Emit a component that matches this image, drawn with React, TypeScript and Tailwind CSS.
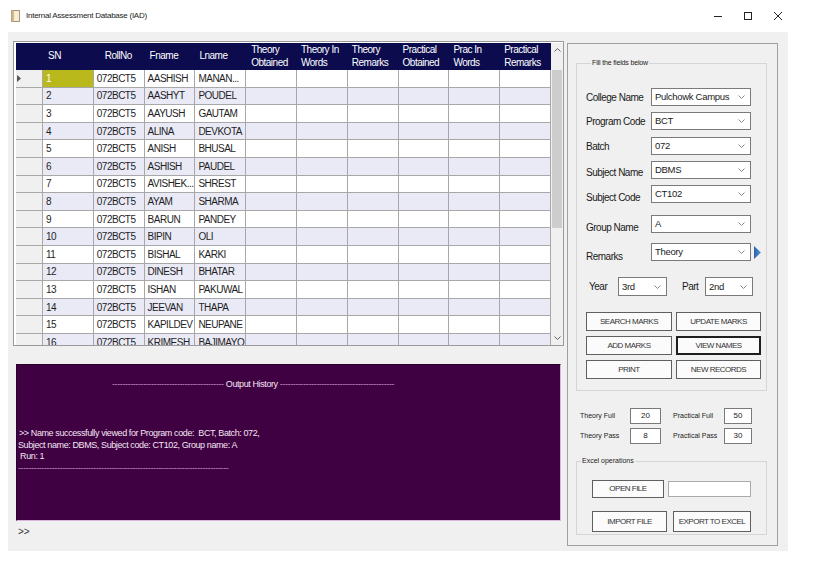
import React from 'react';

const rows: [string, string, string, string][] = [
  ['1', '072BCT5', 'AASHISH', 'MANAN...'],
  ['2', '072BCT5', 'AASHYT', 'POUDEL'],
  ['3', '072BCT5', 'AAYUSH', 'GAUTAM'],
  ['4', '072BCT5', 'ALINA', 'DEVKOTA'],
  ['5', '072BCT5', 'ANISH', 'BHUSAL'],
  ['6', '072BCT5', 'ASHISH', 'PAUDEL'],
  ['7', '072BCT5', 'AVISHEK...', 'SHREST'],
  ['8', '072BCT5', 'AYAM', 'SHARMA'],
  ['9', '072BCT5', 'BARUN', 'PANDEY'],
  ['10', '072BCT5', 'BIPIN', 'OLI'],
  ['11', '072BCT5', 'BISHAL', 'KARKI'],
  ['12', '072BCT5', 'DINESH', 'BHATAR'],
  ['13', '072BCT5', 'ISHAN', 'PAKUWAL'],
  ['14', '072BCT5', 'JEEVAN', 'THAPA'],
  ['15', '072BCT5', 'KAPILDEV', 'NEUPANE'],
  ['16', '072BCT5', 'KRIMESH', 'BAJIMAYO'],
];

const headers: [string, string, string][] = [
  ['SN', '', 'pl-[5px]'],
  ['RollNo', '', 'pl-[11px]'],
  ['Fname', '', 'pl-[5px]'],
  ['Lname', '', 'pl-[4px]'],
  ['Theory', 'Obtained', 'pl-[5px]'],
  ['Theory In', 'Words', 'pl-[4px]'],
  ['Theory', 'Remarks', 'pl-[4px]'],
  ['Practical', 'Obtained', 'pl-[4px]'],
  ['Prac In', 'Words', 'pl-[4px]'],
  ['Practical', 'Remarks', 'pl-[4px]'],
];

function Chevron() {
  return (
    <svg width="7" height="4" viewBox="0 0 7 4" className="shrink-0">
      <polyline points="0.5,0.5 3.5,3.5 6.5,0.5" fill="none" stroke="#8a8a8a" strokeWidth="1" />
    </svg>
  );
}

function Combo({ className, value }: { className: string; value: string }) {
  return (
    <div
      className={`flex items-center justify-between bg-white border border-[#7a7a7a] pl-[3px] pr-[5px] text-[9.5px] tracking-[-0.3px] text-[#1a1a1a] whitespace-nowrap shrink-0 ${className}`}
    >
      <span className="leading-none">{value}</span>
      <Chevron />
    </div>
  );
}

function Btn({
  className,
  children,
  strong,
}: {
  className: string;
  children: React.ReactNode;
  strong?: boolean;
}) {
  return (
    <div
      className={`flex items-center justify-center bg-[#fbfbfb] text-[8px] tracking-[-0.5px] text-[#333] whitespace-nowrap shrink-0 ${
        strong ? 'border-2 border-[#1e1e1e]' : 'border border-[#5f5f5f]'
      } ${className}`}
    >
      {children}
    </div>
  );
}

const fieldRows: { label: string; value: string; mt: string; lp: string; arrow?: boolean }[] = [
  { label: 'College Name', value: 'Pulchowk Campus', mt: 'mt-[20px]', lp: '' },
  { label: 'Program Code', value: 'BCT', mt: 'mt-[6px]', lp: '' },
  { label: 'Batch', value: '072', mt: 'mt-[7px]', lp: '' },
  { label: 'Subject Name', value: 'DBMS', mt: 'mt-[6px]', lp: 'pt-[5px]' },
  { label: 'Subject Code', value: 'CT102', mt: 'mt-[6px]', lp: 'pt-[6px]' },
  { label: 'Group Name', value: 'A', mt: 'mt-[12px]', lp: 'pt-[6px]' },
  { label: 'Remarks', value: 'Theory', mt: 'mt-[10px]', lp: 'pt-[8px]', arrow: true },
];

const dash = (n: number) => '-'.repeat(n);

export default function App() {
  return (
    <div className="w-[820px] h-[571px] bg-white overflow-hidden font-['Liberation_Sans',Arial,sans-serif] text-[#1a1a1a]">
      {/* Title bar */}
      <div className="h-[32px] flex items-center">
        <svg width="10" height="12" viewBox="0 0 10 12" className="ml-[11px]">
          <rect x="0.5" y="0.5" width="8" height="11" fill="#f4ecd6" stroke="#a59570" />
          <rect x="0.5" y="0.5" width="2.5" height="11" fill="#cdb88a" />
        </svg>
        <span className="ml-[5px] text-[8px] tracking-[-0.25px] text-[#222]">Internal Assessment Database (IAD)</span>
        <div className="ml-auto mr-[27px] flex">
          <div className="w-[30px] flex justify-center items-center h-[20px]">
            <svg width="10" height="10" viewBox="0 0 10 10">
              <line x1="1" y1="5.5" x2="9" y2="5.5" stroke="#222" strokeWidth="1" />
            </svg>
          </div>
          <div className="w-[30px] flex justify-center items-center h-[20px]">
            <svg width="10" height="10" viewBox="0 0 10 10">
              <rect x="1.5" y="1.5" width="7" height="7" fill="none" stroke="#222" strokeWidth="1" />
            </svg>
          </div>
          <div className="w-[30px] flex justify-center items-center h-[20px]">
            <svg width="10" height="10" viewBox="0 0 10 10">
              <line x1="1" y1="1" x2="9" y2="9" stroke="#222" strokeWidth="1" />
              <line x1="9" y1="1" x2="1" y2="9" stroke="#222" strokeWidth="1" />
            </svg>
          </div>
        </div>
      </div>

      {/* Client area */}
      <div className="ml-[8px] w-[780px] h-[519px] bg-[#f0f0f0] flex">
        {/* Left column */}
        <div className="ml-[5px] mt-[9px] w-[551px] flex flex-col">
          {/* Data grid */}
          <div className="h-[305px] border border-[#9a9a9a] bg-white pl-[2px] pt-[1px] flex overflow-hidden">
            <div className="w-[535px] flex flex-col overflow-hidden">
              <div className="h-[27px] shrink-0 bg-[#0b0b4e] grid grid-cols-[27px_repeat(10,minmax(0,1fr))] text-white text-[10px] tracking-[-0.5px] leading-[12.5px]">
                <div />
                {headers.map(([a, b, p], i) => (
                  <div key={i} className={`flex flex-col justify-center whitespace-nowrap ${p}`}>
                    <span>{a}</span>
                    {b && <span>{b}</span>}
                  </div>
                ))}
              </div>
              {rows.map((r, i) => (
                <div
                  key={i}
                  className={`grid grid-cols-[27px_repeat(10,minmax(0,1fr))] h-[17.6px] shrink-0 text-[10px] tracking-[-0.5px] ${
                    i % 2 === 1 ? 'bg-[#eaeaf7]' : 'bg-white'
                  }`}
                >
                  <div className="bg-[#f0f0f0] border-r border-b border-[#a8a8a8] flex items-center pl-[1px]">
                    {i === 0 && (
                      <svg width="4" height="7" viewBox="0 0 4 7">
                        <polygon points="0,0 4,3.5 0,7" fill="#555" />
                      </svg>
                    )}
                  </div>
                  {Array.from({ length: 10 }).map((_, c) => {
                    const text = c < 4 ? r[c] : '';
                    const sel = i === 0 && c === 0;
                    return (
                      <div
                        key={c}
                        className={`border-r border-b border-[#a8a8a8] flex items-center pl-[3px] whitespace-nowrap overflow-hidden ${
                          sel ? 'bg-[#b9b91c] text-white' : 'text-[#1e1e1e]'
                        }`}
                      >
                        {text}
                      </div>
                    );
                  })}
                </div>
              ))}
            </div>
            {/* Scrollbar */}
            <div className="w-[12px] bg-[#f0f0f0] flex flex-col items-center">
              <div className="h-[14px] w-full flex items-center justify-center">
                <svg width="7" height="4" viewBox="0 0 7 4">
                  <polyline points="0.5,3.5 3.5,0.5 6.5,3.5" fill="none" stroke="#606060" strokeWidth="1" />
                </svg>
              </div>
              <div className="mt-[13px] h-[158px] w-[10px] bg-[#cdcdcd]" />
              <div className="flex-1" />
              <div className="h-[14px] w-full flex items-center justify-center">
                <svg width="7" height="4" viewBox="0 0 7 4">
                  <polyline points="0.5,0.5 3.5,3.5 6.5,0.5" fill="none" stroke="#606060" strokeWidth="1" />
                </svg>
              </div>
            </div>
          </div>

          {/* Output history */}
          <div className="mt-[18px] ml-[3px] w-[545px] h-[157px] bg-[#3f0141] border-t border-l border-[#2c002c] border-b border-r border-b-[#d9b6d9] border-r-[#d9b6d9] text-[9px] tracking-[-0.4px] text-[#f3e6f3] flex flex-col">
            <div className="pt-[13px] pl-[95px] leading-[12px] whitespace-pre">
              <span className="text-[#c58ac5]">{dash(43)}</span> Output History{' '}
              <span className="text-[#c58ac5]">{dash(44)}</span>
            </div>
            <div className="mt-[38px] leading-[11.5px] whitespace-pre">
              <div className="pl-[2px]">{'>> Name successfully viewed for Program code:  BCT, Batch: 072,'}</div>
              <div className="pl-[1px]">Subject name: DBMS, Subject code: CT102, Group name: A</div>
              <div className="pl-[1px]">{' Run: 1'}</div>
              <div className="pl-[1px] text-[#c58ac5]">{dash(81)}</div>
            </div>
          </div>
          <div className="mt-[5px] ml-[5px] text-[10px] leading-[12px] text-[#333]">{'>>'}</div>
        </div>

        {/* Right panel */}
        <div className="ml-[3px] mt-[11px] w-[211px] h-[503px] border border-[#a0a0a0] flex flex-col">
          <fieldset className="mt-[14px] ml-[8px] w-[191px] border border-[#d5d5d5] pl-[9px] pb-[11px]">
            <legend className="ml-[5px] px-[1px] text-[7px] tracking-[-0.15px] leading-[10px] text-[#222]">
              Fill the fields below
            </legend>
            {fieldRows.map((f) => (
              <div key={f.label} className={`flex items-center h-[18px] ${f.mt}`}>
                <span
                  className={`w-[65px] shrink-0 text-[10px] tracking-[-0.5px] leading-[13px] whitespace-nowrap ${f.lp}`}
                >
                  {f.label}
                </span>
                <Combo className="w-[100px] h-[18px]" value={f.value} />
                {f.arrow && (
                  <svg width="7" height="13" viewBox="0 0 7 13" className="ml-[3px] shrink-0">
                    <defs>
                      <linearGradient id="tri" x1="0" y1="0" x2="1" y2="0">
                        <stop offset="0" stopColor="#2a63aa" />
                        <stop offset="1" stopColor="#5b93d6" />
                      </linearGradient>
                    </defs>
                    <polygon points="0,0 7,6.5 0,13" fill="url(#tri)" />
                  </svg>
                )}
              </div>
            ))}
            <div className="mt-[16px] flex items-center h-[19px] text-[10px] tracking-[-0.5px]">
              <span className="ml-[3px] w-[29px] shrink-0">Year</span>
              <Combo className="w-[49px] h-[19px]" value="3rd" />
              <span className="ml-[15px] w-[23px] shrink-0">Part</span>
              <Combo className="w-[48px] h-[19px]" value="2nd" />
            </div>
            <div className="mt-[16px] grid grid-cols-[86px_85px] gap-x-[4px] gap-y-[5px]">
              <Btn className="h-[19px]">SEARCH MARKS</Btn>
              <Btn className="h-[19px]">UPDATE MARKS</Btn>
              <Btn className="h-[19px]">ADD MARKS</Btn>
              <Btn className="h-[19px]" strong>
                VIEW NAMES
              </Btn>
              <Btn className="h-[19px]">PRINT</Btn>
              <Btn className="h-[19px]">NEW RECORDS</Btn>
            </div>
          </fieldset>

          <div className="mt-[17px] pl-[12px] flex items-center h-[16px] text-[7px] whitespace-nowrap">
            <span className="w-[50px] shrink-0">Theory Full</span>
            <div className="w-[31px] h-[16px] bg-white border border-[#7a7a7a] flex items-center justify-center text-[8px]">
              20
            </div>
            <span className="ml-[12px] w-[51px] shrink-0">Practical Full</span>
            <div className="w-[28px] h-[16px] bg-white border border-[#7a7a7a] flex items-center justify-center text-[8px]">
              50
            </div>
          </div>
          <div className="mt-[4px] pl-[12px] flex items-center h-[16px] text-[7px] whitespace-nowrap">
            <span className="w-[50px] shrink-0">Theory Pass</span>
            <div className="w-[31px] h-[16px] bg-white border border-[#7a7a7a] flex items-center justify-center text-[8px]">
              8
            </div>
            <span className="ml-[12px] w-[51px] shrink-0">Practical Pass</span>
            <div className="w-[28px] h-[16px] bg-white border border-[#7a7a7a] flex items-center justify-center text-[8px]">
              30
            </div>
          </div>

          <fieldset className="mt-[12px] ml-[8px] w-[191px] border border-[#d5d5d5] pb-[2px]">
            <legend className="ml-[4px] px-[1px] text-[7px] leading-[10px] text-[#222]">Excel operations</legend>
            <div className="mt-[14px] ml-[15px] flex items-center">
              <Btn className="w-[72px] h-[18px]">OPEN FILE</Btn>
              <div className="ml-[4px] w-[83px] h-[16px] bg-white border border-[#ababab]" />
            </div>
            <div className="mt-[13px] ml-[15px] flex items-center">
              <Btn className="w-[75px] h-[21px]">IMPORT FILE</Btn>
              <Btn className="ml-[6px] w-[78px] h-[21px]">EXPORT TO EXCEL</Btn>
            </div>
          </fieldset>
        </div>
      </div>
    </div>
  );
}
